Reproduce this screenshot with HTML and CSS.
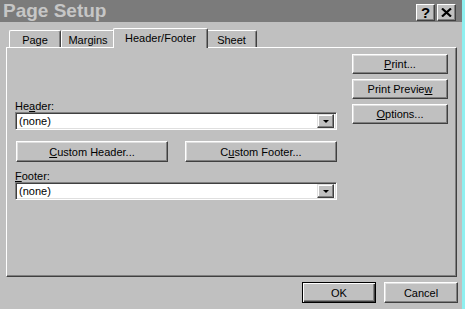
FILE: index.html
```html
<!DOCTYPE html>
<html lang="en">
<head>
    <meta charset="UTF-8">
    <title>Page Setup</title>
    <link rel="stylesheet" href="styles.css">
</head>
<body>
<div class="window">
    <div class="titlebar">
        <span class="title">Page Setup</span>
        <div class="title-buttons">
            <span class="tbtn">?</span>
            <span class="tbtn">
                <svg width="11" height="9" viewBox="0 0 11 9">
                    <path d="M1 0.5 L10 8.5 M10 0.5 L1 8.5" stroke="#000" stroke-width="2.2"/>
                </svg>
            </span>
        </div>
    </div>
    <div class="content">
        <div class="tabs">
            <div class="tab tab-page">Page</div>
            <div class="tab tab-margins">Margins</div>
            <div class="tab tab-header active">Header/Footer</div>
            <div class="tab tab-sheet">Sheet</div>
        </div>
        <div class="panel">
            <div class="fields">
                <label class="field-label">He<u>a</u>der:</label>
                <div class="combo">
                    <span class="combo-text">(none)</span>
                    <span class="drop"><span class="arrow"></span></span>
                </div>
                <div class="custom-row">
                    <button class="btn custom-btn"><u>C</u>ustom Header...</button>
                    <button class="btn custom-btn">C<u>u</u>stom Footer...</button>
                </div>
                <label class="field-label"><u>F</u>ooter:</label>
                <div class="combo">
                    <span class="combo-text">(none)</span>
                    <span class="drop"><span class="arrow"></span></span>
                </div>
            </div>
            <div class="side-buttons">
                <button class="btn side-btn"><u>P</u>rint...</button>
                <button class="btn side-btn">Print Previe<u>w</u></button>
                <button class="btn side-btn"><u>O</u>ptions...</button>
            </div>
        </div>
        <div class="footer-buttons">
            <button class="btn default-btn">OK</button>
            <button class="btn cancel-btn">Cancel</button>
        </div>
    </div>
</div>
</body>
</html>
```

FILE: styles.css
```css
body {
    margin: 0;
    background-color: #8ff0f0;
    font-family: "Liberation Sans", Arial, sans-serif;
    font-size: 11px;
    color: #000;
}

.window {
    width: 462px;
    height: 309px;
    background-color: #c0c0c0;
    overflow: hidden;
}

.titlebar {
    height: 22px;
    background-color: #7b7b7b;
    display: flex;
    align-items: center;
    justify-content: space-between;
}

.title {
    color: #c6c6c6;
    font-weight: bold;
    font-size: 19px;
    padding-left: 3px;
    line-height: 22px;
}

.title-buttons {
    display: flex;
    gap: 2px;
    padding-right: 6px;
    padding-top: 2px;
}

.tbtn {
    width: 19px;
    height: 17px;
    box-sizing: border-box;
    background-color: #c0c0c0;
    border: 1px solid;
    border-color: #fff #404040 #404040 #fff;
    box-shadow: inset -1px -1px #808080;
    display: flex;
    align-items: center;
    justify-content: center;
    font-weight: bold;
    font-size: 15px;
    line-height: 1;
}

.content {
    padding: 6px 0 0 6px;
}

.tabs {
    display: flex;
    align-items: flex-end;
    height: 19px;
    padding-left: 3px;
    position: relative;
    z-index: 1;
}

.tab {
    height: 17px;
    box-sizing: border-box;
    border: 1px solid;
    border-color: #fff #404040 transparent #fff;
    border-bottom: none;
    box-shadow: inset -1px 0 #808080;
    border-radius: 2px 2px 0 0;
    display: flex;
    align-items: center;
    justify-content: center;
    padding-top: 1px;
}

.tab-page {
    width: 52px;
}

.tab-margins {
    width: 54px;
}

.tab-header {
    width: 95px;
    margin: 0 -2px;
}

.tab-sheet {
    width: 51px;
}

.tab.active {
    height: 20px;
    margin-bottom: -1px;
    background-color: #c0c0c0;
    position: relative;
    z-index: 2;
    padding-bottom: 2px;
}

.panel {
    width: 451px;
    height: 230px;
    box-sizing: border-box;
    border: 1px solid;
    border-color: #fff #404040 #404040 #fff;
    box-shadow: inset -1px -1px #808080;
    display: flex;
    justify-content: space-between;
    padding: 6px 8px 0 8px;
}

.fields {
    width: 322px;
    padding-top: 46px;
    display: flex;
    flex-direction: column;
}

.field-label {
    display: block;
    height: 12px;
    line-height: 12px;
}

.combo {
    height: 18px;
    box-sizing: border-box;
    background-color: #fff;
    border: 1px solid;
    border-color: #808080 #fff #fff #808080;
    box-shadow: inset 1px 1px #404040, inset -1px -1px #dfdfdf;
    display: flex;
    align-items: center;
    justify-content: space-between;
    padding: 1px 2px 1px 2px;
}

.combo-text {
    padding-left: 1px;
}

.drop {
    width: 17px;
    height: 14px;
    box-sizing: border-box;
    background-color: #c0c0c0;
    border: 1px solid;
    border-color: #dfdfdf #404040 #404040 #dfdfdf;
    box-shadow: inset -1px -1px #808080, inset 1px 1px #fff;
    display: flex;
    align-items: center;
    justify-content: center;
}

.arrow {
    width: 0;
    height: 0;
    border-left: 3px solid transparent;
    border-right: 3px solid transparent;
    border-top: 3px solid #000;
}

.custom-row {
    display: flex;
    justify-content: space-between;
    margin: 11px 0 8px 1px;
}

.btn {
    font-family: "Liberation Sans", Arial, sans-serif;
    font-size: 11px;
    color: #000;
    background-color: #c0c0c0;
    box-sizing: border-box;
    border: 1px solid;
    border-color: #fff #404040 #404040 #fff;
    box-shadow: inset -1px -1px #808080, inset 1px 1px #dfdfdf;
    padding: 0;
    margin: 0;
}

.custom-btn {
    width: 152px;
    height: 21px;
}

.side-buttons {
    display: flex;
    flex-direction: column;
    gap: 5px;
    width: 96px;
}

.side-btn {
    height: 20px;
}

.footer-buttons {
    display: flex;
    gap: 8px;
    padding: 5px 0 0 296px;
}

.default-btn {
    width: 74px;
    height: 21px;
    border: 1px solid #000;
    box-shadow: inset 1px 1px #fff, inset -1px -1px #404040, inset -2px -2px #808080;
}

.cancel-btn {
    width: 74px;
    height: 21px;
}
```
